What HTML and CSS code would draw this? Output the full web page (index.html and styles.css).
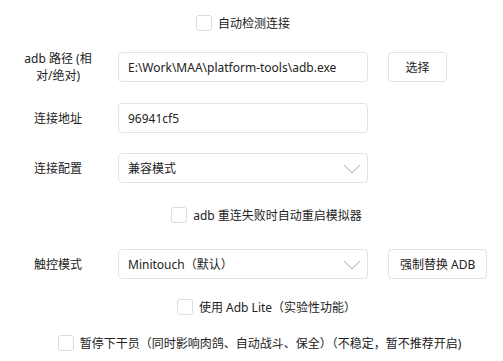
FILE: index.html
```html
<!DOCTYPE html>
<html lang="zh-CN">
<head>
  <meta charset="UTF-8">
  <title>连接设置</title>
  <link rel="stylesheet" href="styles.css">
</head>
<body>
  <div class="settings">
    <div class="check-row first">
      <label class="check"><span class="box"></span>自动检测连接</label>
    </div>

    <div class="row r-path">
      <div class="label narrow">adb 路径 (相对/绝对)</div>
      <div class="field">E:\Work\MAA\platform-tools\adb.exe</div>
      <button class="btn">选择</button>
    </div>

    <div class="row r-addr">
      <div class="label">连接地址</div>
      <div class="field">96941cf5</div>
    </div>

    <div class="row r-conf">
      <div class="label">连接配置</div>
      <div class="field select">兼容模式
        <svg class="chev" width="18" height="10" viewBox="0 0 18 10"><path d="M1 1 L9 9 L17 1" fill="none" stroke="#c4c4c4" stroke-width="1.2"/></svg>
      </div>
    </div>

    <div class="check-row r-restart">
      <label class="check"><span class="box"></span>adb 重连失败时自动重启模拟器</label>
    </div>

    <div class="row r-touch">
      <div class="label">触控模式</div>
      <div class="field select">Minitouch（默认）
        <svg class="chev" width="18" height="10" viewBox="0 0 18 10"><path d="M1 1 L9 9 L17 1" fill="none" stroke="#c4c4c4" stroke-width="1.2"/></svg>
      </div>
      <button class="btn">强制替换 ADB</button>
    </div>

    <div class="check-row r-lite">
      <label class="check"><span class="box"></span>使用 Adb Lite（实验性功能）</label>
    </div>

    <div class="check-row r-pause">
      <label class="check"><span class="box"></span>暂停下干员（同时影响肉鸽、自动战斗、保全）（不稳定，暂不推荐开启)</label>
    </div>
  </div>
</body>
</html>
```

FILE: styles.css
```css
body {
  margin: 0;
  background: #ffffff;
  font-family: "Noto Sans", "Noto Sans CJK SC", sans-serif;
  font-size: 12px;
  color: #222;
}

.settings {
  padding-top: 15px;
}

.row {
  display: flex;
  align-items: center;
  height: 30px;
  padding-left: 8px;
}

.label {
  width: 100px;
  margin-right: 10px;
  text-align: center;
  line-height: 17px;
}

.label.narrow {
  box-sizing: border-box;
  padding: 0 14px;
}

.field {
  box-sizing: border-box;
  width: 250px;
  height: 30px;
  border: 1px solid #e3e3e3;
  border-radius: 4px;
  padding: 0 9px;
  display: flex;
  align-items: center;
  position: relative;
}

.chev {
  position: absolute;
  right: 6px;
  top: 10px;
}

.btn {
  margin-left: 20px;
  min-width: 59px;
  height: 30px;
  padding: 0 11px;
  background: #fff;
  border: 1px solid #e3e3e3;
  border-radius: 4px;
  font-family: inherit;
  font-size: 12px;
  color: #222;
}

.check-row {
  display: flex;
  justify-content: center;
  height: 16px;
}

.check {
  display: flex;
  align-items: center;
  white-space: nowrap;
}

.box {
  box-sizing: border-box;
  width: 16px;
  height: 16px;
  border: 1px solid #dcdcdc;
  border-radius: 3px;
  margin-right: 6px;
}

.first { width: 486px; }
.r-path { margin-top: 21px; }
.r-addr { margin-top: 21px; }
.r-conf { margin-top: 20px; }
.r-restart { margin-top: 24px; padding-left: 30px; }
.r-touch { margin-top: 26px; }
.r-lite { margin-top: 20px; padding-left: 30px; }
.r-pause { margin-top: 20px; padding-left: 16px; }
```
